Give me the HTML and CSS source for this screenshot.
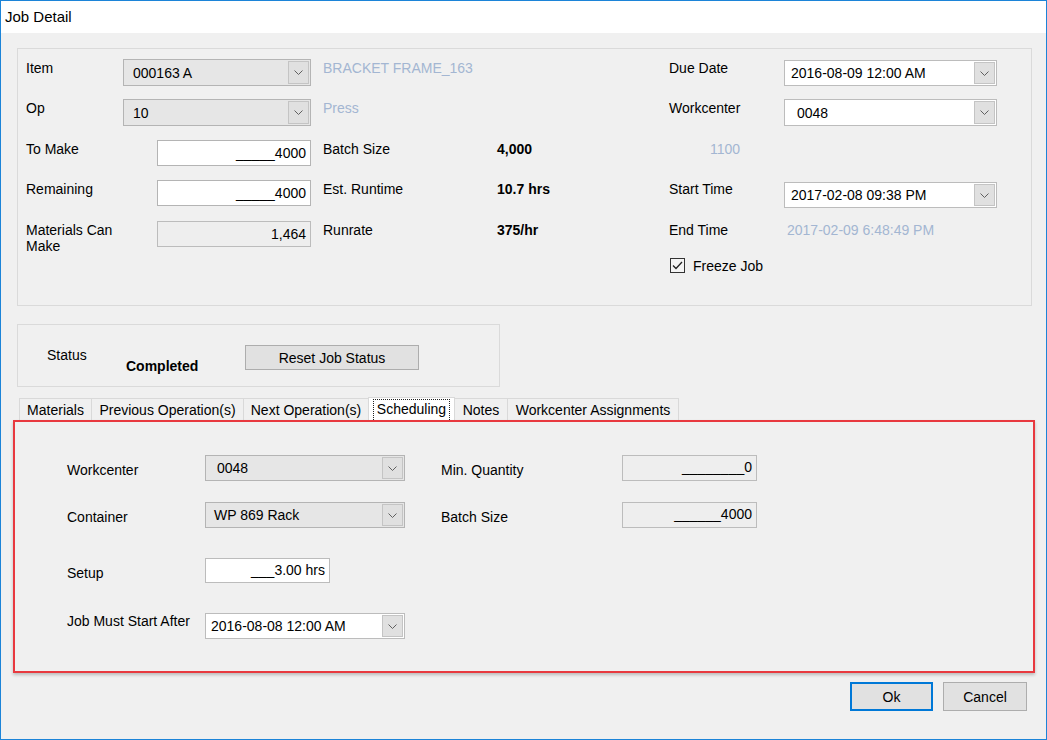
FILE: index.html
```html
<!DOCTYPE html>
<html>
<head>
<meta charset="utf-8">
<title>Job Detail</title>
<link rel="stylesheet" href="styles.css">
</head>
<body>
<div class="window">
  <div class="titlebar">Job Detail</div>
  <div class="client">
    <div class="panel">
      <div class="grid">
        <div class="lbl">Item</div>
        <div class="combo gray"><span class="txt p10">000163 A</span><span class="dd"><svg width="9" height="5" viewBox="0 0 9 5"><path d="M0.5 0.5 L4.5 4.5 L8.5 0.5" stroke="#606060" fill="none"/></svg></span></div>
        <div class="desc span2">BRACKET FRAME_163</div>
        <div class="lbl">Due Date</div>
        <div class="combo white mt1"><span class="txt p6">2016-08-09 12:00 AM</span><span class="dd"><svg width="9" height="5" viewBox="0 0 9 5"><path d="M0.5 0.5 L4.5 4.5 L8.5 0.5" stroke="#606060" fill="none"/></svg></span></div>

        <div class="lbl">Op</div>
        <div class="combo gray"><span class="txt p10">10</span><span class="dd"><svg width="9" height="5" viewBox="0 0 9 5"><path d="M0.5 0.5 L4.5 4.5 L8.5 0.5" stroke="#606060" fill="none"/></svg></span></div>
        <div class="desc span2">Press</div>
        <div class="lbl">Workcenter</div>
        <div class="combo white tall"><span class="txt p13">0048</span><span class="dd"><svg width="9" height="5" viewBox="0 0 9 5"><path d="M0.5 0.5 L4.5 4.5 L8.5 0.5" stroke="#606060" fill="none"/></svg></span></div>

        <div class="lbl">To Make</div>
        <div class="tb">_____4000</div>
        <div class="lbl">Batch Size</div>
        <div class="val">4,000</div>
        <div class="desc ind">1100</div>
        <div></div>

        <div class="lbl">Remaining</div>
        <div class="tb">_____4000</div>
        <div class="lbl">Est. Runtime</div>
        <div class="val">10.7 hrs</div>
        <div class="lbl">Start Time</div>
        <div class="combo white mt2"><span class="txt p6">2017-02-08 09:38 PM</span><span class="dd"><svg width="9" height="5" viewBox="0 0 9 5"><path d="M0.5 0.5 L4.5 4.5 L8.5 0.5" stroke="#606060" fill="none"/></svg></span></div>

        <div class="lbl">Materials Can<br>Make</div>
        <div class="tb ro">1,464</div>
        <div class="lbl">Runrate</div>
        <div class="val">375/hr</div>
        <div class="lbl">End Time</div>
        <div class="desc ind3">2017-02-09 6:48:49 PM</div>

        <div class="check">
          <span class="cbox"><svg width="13" height="13" viewBox="0 0 13 13"><path d="M2 6.5 L5 9.5 L11 3" stroke="#222" stroke-width="1.3" fill="none"/></svg></span>
          <span>Freeze Job</span>
        </div>
      </div>
    </div>

    <div class="status">
      <div class="st-lbl">Status</div>
      <div class="st-val">Completed</div>
      <div class="btn reset">Reset Job Status</div>
    </div>

    <div class="tabs">
      <div class="tab w-mat">Materials</div>
      <div class="tab w-prev">Previous Operation(s)</div>
      <div class="tab w-next">Next Operation(s)</div>
      <div class="tab sel"><span class="focus">Scheduling</span></div>
      <div class="tab w-notes">Notes</div>
      <div class="tab w-wc last">Workcenter Assignments</div>
    </div>

    <div class="tabpage">
      <div class="sgrid">
        <div class="slbl">Workcenter</div>
        <div class="combo gray s"><span class="txt p12">0048</span><span class="dd"><svg width="9" height="5" viewBox="0 0 9 5"><path d="M0.5 0.5 L4.5 4.5 L8.5 0.5" stroke="#606060" fill="none"/></svg></span></div>
        <div class="slbl">Min. Quantity</div>
        <div class="box ro">________0</div>

        <div class="slbl">Container</div>
        <div class="combo gray s"><span class="txt p8">WP 869 Rack</span><span class="dd"><svg width="9" height="5" viewBox="0 0 9 5"><path d="M0.5 0.5 L4.5 4.5 L8.5 0.5" stroke="#606060" fill="none"/></svg></span></div>
        <div class="slbl">Batch Size</div>
        <div class="box ro">______4000</div>

        <div class="slbl">Setup</div>
        <div class="box setup">___3.00 hrs</div>
        <div></div>
        <div></div>

        <div class="slbl top">Job Must Start After</div>
        <div class="combo white s"><span class="txt p5">2016-08-08 12:00 AM</span><span class="dd"><svg width="9" height="5" viewBox="0 0 9 5"><path d="M0.5 0.5 L4.5 4.5 L8.5 0.5" stroke="#606060" fill="none"/></svg></span></div>
        <div></div>
        <div></div>
      </div>
    </div>

    <div class="buttons">
      <div class="btn ok">Ok</div>
      <div class="btn cancel">Cancel</div>
    </div>
  </div>
</div>
</body>
</html>
```

FILE: styles.css
```css
* { box-sizing: border-box; }
html, body { margin: 0; padding: 0; }
body {
  width: 1047px;
  height: 740px;
  overflow: hidden;
  font-family: "Liberation Sans", Arial, sans-serif;
  font-size: 14px;
  color: #000;
  background: #f0f0f0;
}
.window {
  width: 1047px;
  height: 740px;
  border: 1px solid #1c84d8;
  display: flex;
  flex-direction: column;
  background: #f0f0f0;
}
.titlebar {
  height: 32px;
  line-height: 32px;
  background: #fff;
  padding-left: 4px;
  font-size: 15px;
  flex: none;
}
.client { flex: 1; display: flex; flex-direction: column; }

/* top panel */
.panel {
  margin: 15px 0 0 16px;
  width: 1015px;
  height: 258px;
  border: 1px solid #dadada;
  padding: 10px 0 0 8px;
  flex: none;
}
.grid {
  display: grid;
  grid-template-columns: 97px 200px 174px 172px 115px 213px;
  grid-template-rows: 40px 41px 40px 41px 37px 20px;
}
.lbl { line-height: 16px; padding-top: 1px; white-space: nowrap; }
.desc { line-height: 16px; padding-top: 1px; color: #a3b6d2; white-space: nowrap; }
.span2 { grid-column: span 2; }
.ind { padding-left: 41px; }
.ind3 { padding-left: 3px; }
.val { line-height: 16px; padding-top: 1px; font-weight: bold; }

.combo {
  display: flex;
  align-items: center;
  height: 27px;
  width: 188px;
  border: 1px solid #b4b4b4;
}
.combo.gray { background: #e6e6e6; }
.combo.white { background: #fff; border-color: #bcbcbc; width: 213px; height: 26px; }
.combo.white.tall { height: 27px; }
.mt1 { margin-top: 1px; }
.mt2 { margin-top: 2px; }
.combo .txt { flex: 1; white-space: nowrap; line-height: 16px; }
.p5 { padding-left: 5px; }
.p6 { padding-left: 6px; }
.p8 { padding-left: 8px; }
.p10 { padding-left: 9px; }
.p12 { padding-left: 11px; }
.p13 { padding-left: 12px; }
.dd {
  width: 21px;
  align-self: stretch;
  margin: 1px 1px 1px 0;
  border: 1px solid #c4c4c4;
  background: #e0e0e0;
  display: flex;
  align-items: center;
  justify-content: center;
}
.dd svg { display: block; }

.tb {
  height: 26px;
  width: 154px;
  margin-left: 34px;
  border: 1px solid #b4b4b4;
  background: #fff;
  text-align: right;
  padding-right: 4px;
  line-height: 25px;
  white-space: nowrap;
}
.tb.ro { background: #eeeeee; border-color: #bcbcbc; }

.check {
  grid-column: 5 / span 2;
  display: flex;
  align-items: center;
  gap: 8px;
  padding-left: 1px;
  height: 15px;
}
.cbox {
  width: 15px;
  height: 15px;
  border: 1px solid #333;
  background: #f4f4f4;
  display: flex;
  align-items: center;
  justify-content: center;
}
.cbox svg { display: block; }

/* status */
.status {
  margin: 18px 0 0 16px;
  width: 483px;
  height: 63px;
  border: 1px solid #dadada;
  display: flex;
  align-items: flex-start;
  padding-left: 29px;
  flex: none;
}
.st-lbl { width: 79px; margin-top: 22px; line-height: 16px; }
.st-val { width: 119px; margin-top: 33px; line-height: 16px; font-weight: bold; }
.btn {
  background: #e1e1e1;
  border: 1px solid #adadad;
  display: flex;
  align-items: center;
  justify-content: center;
  white-space: nowrap;
}
.reset { width: 174px; height: 25px; margin-top: 20px; }

/* tabs */
.tabs {
  margin-top: 10px;
  height: 23px;
  padding-left: 18px;
  display: flex;
  align-items: flex-end;
  flex: none;
}
.tab {
  height: 22px;
  border: 1px solid #d9d9d9;
  border-right: none;
  border-bottom: none;
  text-align: center;
  padding-top: 2px;
  line-height: 19px;
  white-space: nowrap;
  background: #f0f0f0;
}
.tab.last { border-right: 1px solid #d9d9d9; }
.w-mat { width: 72px; }
.w-prev { width: 152px; }
.w-next { width: 125px; }
.w-notes { width: 52px; }
.w-wc { width: 172px; }
.tab.sel {
  width: 87px;
  height: 23px;
  background: #fff;
  border-right: 1px solid #d9d9d9;
  padding-top: 1px;
  line-height: 18px;
}
.tab.sel + .tab { border-left: none; }
.focus {
  display: inline-block;
  border: 1px dotted #222;
  border-bottom: none;
  padding: 0 3px;
  height: 21px;
  line-height: 19px;
}

.tabpage {
  margin-left: 12px;
  width: 1022px;
  height: 253px;
  border: 2px solid #e8393f;
  box-shadow: 0 2px 3px rgba(0, 0, 0, 0.22);
  padding: 33px 0 0 52px;
  flex: none;
}
.sgrid {
  display: grid;
  grid-template-columns: 138px 236px 181px 135px;
  grid-template-rows: 47px 56px 55px 26px;
}
.slbl { line-height: 16px; padding-top: 7px; white-space: nowrap; }
.slbl.top { padding-top: 0; }
.combo.s { width: 200px; height: 26px; }
.box {
  height: 26px;
  border: 1px solid #bcbcbc;
  text-align: right;
  padding-right: 4px;
  line-height: 23px;
  white-space: nowrap;
}
.box.ro { background: #eeeeee; }
.box.setup { width: 125px; height: 25px; background: #fff; }

.buttons {
  display: flex;
  justify-content: flex-end;
  gap: 10px;
  padding-right: 19px;
  margin-top: 9px;
  flex: none;
}
.ok { width: 83px; height: 29px; border: 2px solid #0078d7; }
.cancel { width: 84px; height: 29px; }
```
